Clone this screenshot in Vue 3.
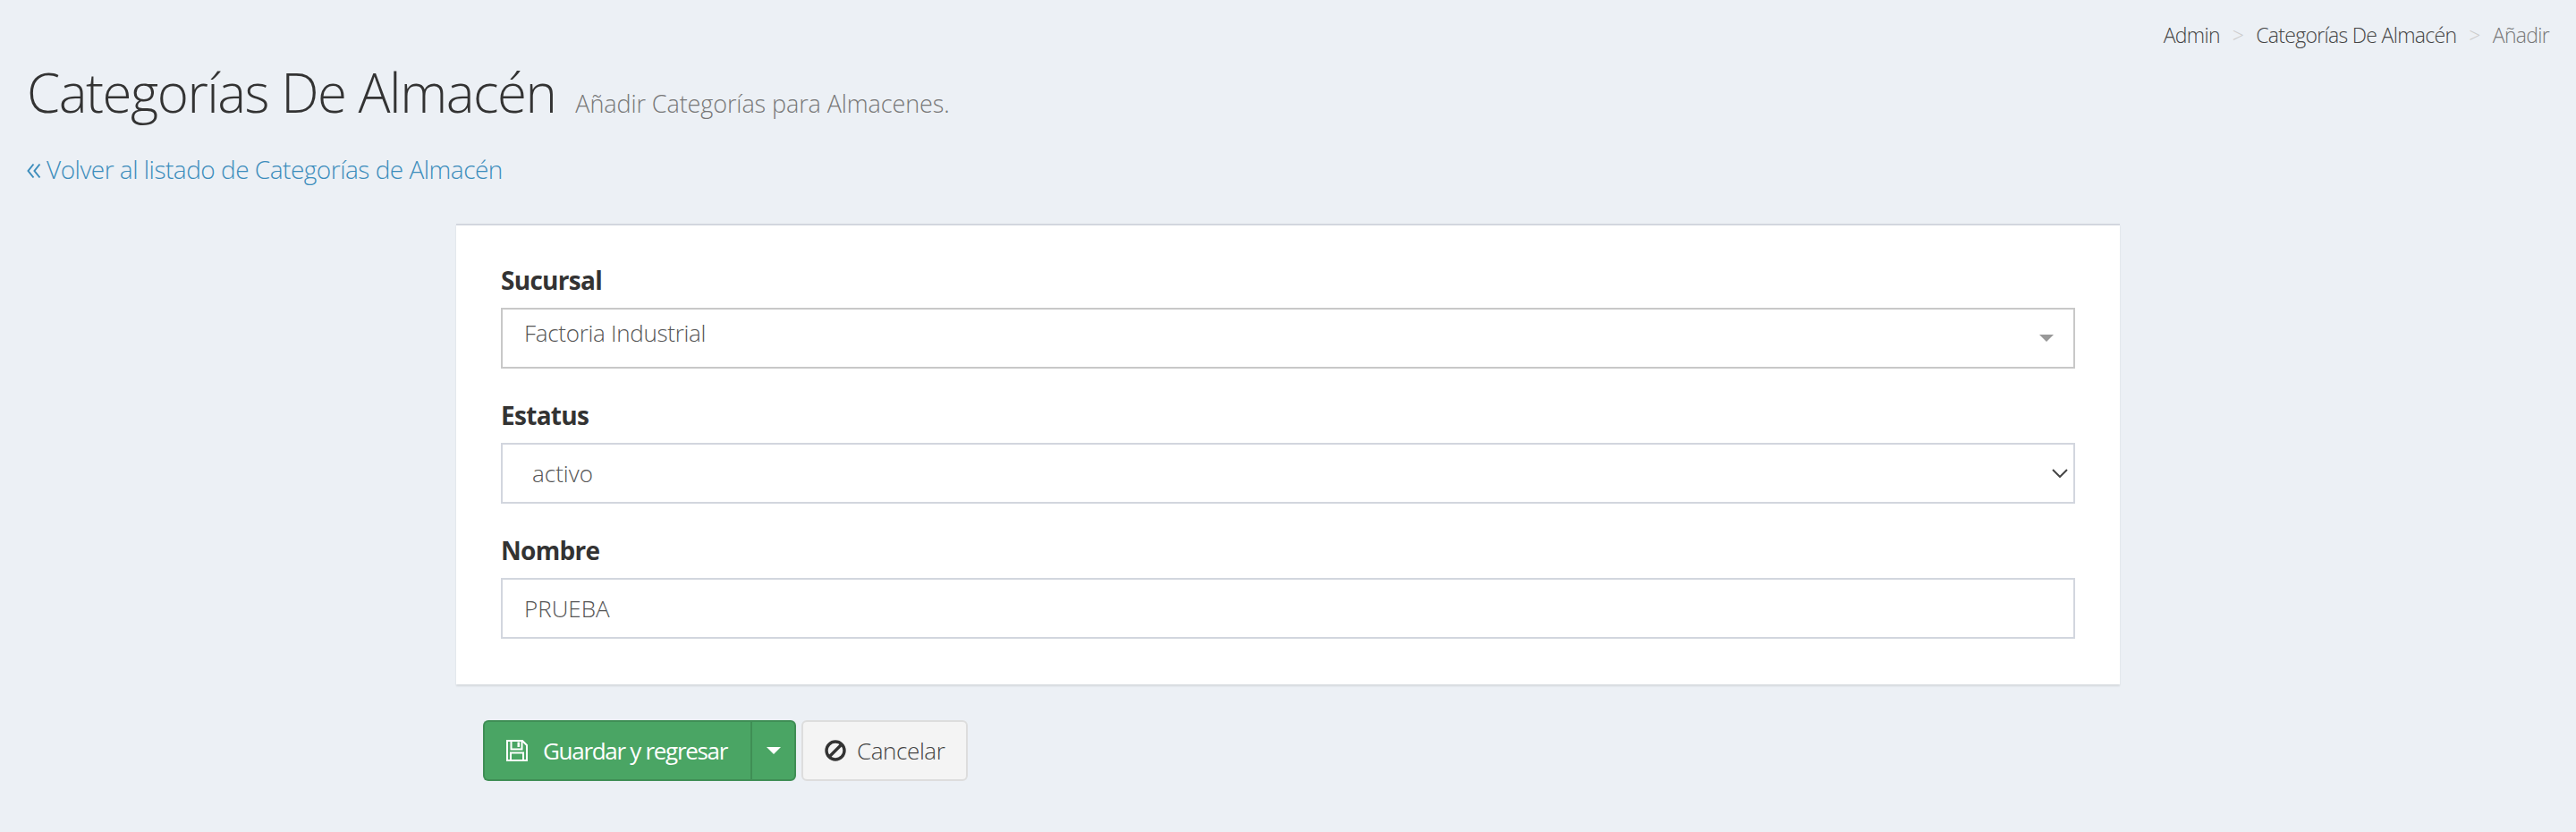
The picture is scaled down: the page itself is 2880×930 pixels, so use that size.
<template>
  <div class="page">
    <nav class="crumbs">
      <span class="crumb">Admin</span><span class="sep">&gt;</span>
      <span class="crumb">Categorías De Almacén</span><span class="sep">&gt;</span>
      <span class="crumb current">Añadir</span>
    </nav>
    <header class="head">
      <h1>Categorías De Almacén</h1>
      <small>Añadir Categorías para Almacenes.</small>
    </header>
    <a class="back">
      <svg class="back-icon" viewBox="0 0 16 18"><path d="M7.500 1.500 1.500 9l6 7.500M14.500 1.500 8.500 9l6 7.500" fill="none" stroke="currentColor" stroke-width="2"/></svg>Volver al listado de Categorías de Almacén
    </a>
    <main class="wrap">
      <section class="card">
        <div class="field">
          <label>Sucursal</label>
          <div class="control s2">
            <span>Factoria Industrial</span>
            <svg class="tri" viewBox="0 0 16 8"><path d="M0 0h16L8 8z" fill="#999"/></svg>
          </div>
        </div>
        <div class="field">
          <label>Estatus</label>
          <div class="control native">
            <span>activo</span>
            <svg class="chev" viewBox="0 0 18 10"><path d="M1 1l8 8 8-8" fill="none" stroke="#444" stroke-width="2"/></svg>
          </div>
        </div>
        <div class="field last">
          <label>Nombre</label>
          <div class="control text"><span>PRUEBA</span></div>
        </div>
      </section>
      <div class="actions">
        <div class="split">
          <button class="save">
            <svg class="ico" viewBox="0 0 24 24"><path d="M1 1h17l5 5v17H1z M5.500 1v9.500h12V1 M5 23v-8.500h14V23" fill="none" stroke="#fff" stroke-width="2"/><path d="M12.500 2.500h2.500v5.500h-2.500z" fill="#fff"/></svg>
            Guardar y regresar
          </button>
          <button class="caret"><svg viewBox="0 0 16 8"><path d="M0 0h16L8 8z" fill="#fff"/></svg></button>
        </div>
        <button class="cancel">
          <svg class="ico" viewBox="0 0 24 24"><circle cx="12" cy="12" r="10" fill="none" stroke="#333" stroke-width="3.400"/><path d="M5 19 19 5" stroke="#333" stroke-width="3.400"/></svg>
          Cancelar
        </button>
      </div>
    </main>
  </div>
</template>

<script setup>
</script>

<style>
html, body { margin: 0; background: #ecf0f5; }
</style>

<style scoped>
.page {
  min-height: 930px;
  box-sizing: border-box;
  background: #ecf0f5;
  padding: 22px 30px 0;
  font-family: "Open Sans", "Noto Sans", sans-serif;
  font-weight: 300;
  color: #333;
}
.crumbs {
  display: flex;
  justify-content: flex-end;
  align-items: baseline;
  font-size: 23px;
  letter-spacing: -0.7px;
  line-height: 34px;
  height: 34px;
  color: #444;
}
.sep { color: #ccc; margin: 0 14px; }
.current { color: #777; }
.head {
  display: flex;
  align-items: baseline;
  margin-top: 12px;
  height: 70px;
}
h1 {
  margin: 0;
  font-size: 60px;
  letter-spacing: -1.5px;
  font-weight: 300;
  line-height: 70px;
  color: #333;
}
small {
  margin-left: 22px;
  font-size: 27px;
  letter-spacing: -0.1px;
  color: #777;
}
.back {
  display: block;
  margin-top: 30px;
  font-size: 28px;
  letter-spacing: -0.5px;
  line-height: 42px;
  color: #3c8dbc;
}
.back-icon { width: 16px; height: 18px; margin-right: 6px; }
.wrap { width: 1860px; margin: 40px auto 0; }
.card {
  box-sizing: border-box;
  height: 515px;
  background: #fff;
  border-top: 2px solid #d2d6de;
  box-shadow: 0 2px 2px rgba(0, 0, 0, 0.1);
  padding: 40px 50px 0;
}
.field { margin-bottom: 31px; }
label {
  display: block;
  font-size: 28px;
  letter-spacing: -0.7px;
  font-weight: 700;
  line-height: 42px;
  margin-bottom: 10px;
}
.control {
  box-sizing: border-box;
  height: 68px;
  display: flex;
  align-items: center;
  justify-content: space-between;
  border: 2px solid #d2d6de;
  background: #fff;
  font-size: 26px;
  color: #555;
  padding: 0 24px;
}
.s2 { border-color: #c8c8c8; padding-bottom: 12px; padding-right: 22px; letter-spacing: -0.3px; }
.native { padding-left: 33px; padding-right: 6px; }
.tri { width: 16px; height: 8px; margin-top: 12px; }
.chev { width: 18px; height: 10px; }
.actions { display: flex; gap: 6px; margin: 40px 0 0 30px; }
.split { display: flex; }
button {
  box-sizing: border-box;
  height: 68px;
  font: inherit;
  font-size: 26px;
  white-space: nowrap;
  display: flex;
  align-items: center;
  cursor: pointer;
}
.save, .caret { background: #4aa564; border: 2px solid #3f8e55; color: #fff; }
.save { width: 299px; padding: 0 24px; gap: 17px; border-radius: 6px 0 0 6px; border-right: 0; font-weight: 400; letter-spacing: -1.3px; }
.caret { width: 51px; justify-content: center; border-radius: 0 6px 6px 0; border-left: 2px solid #3f8e55; }
.caret svg { width: 16px; height: 8px; }
.cancel { width: 186px; padding: 0 24px; gap: 12px; background: #f4f4f4; border: 2px solid #ddd; border-radius: 6px; color: #444; letter-spacing: -0.4px; }
.ico { width: 24px; height: 24px; flex: none; }
</style>
